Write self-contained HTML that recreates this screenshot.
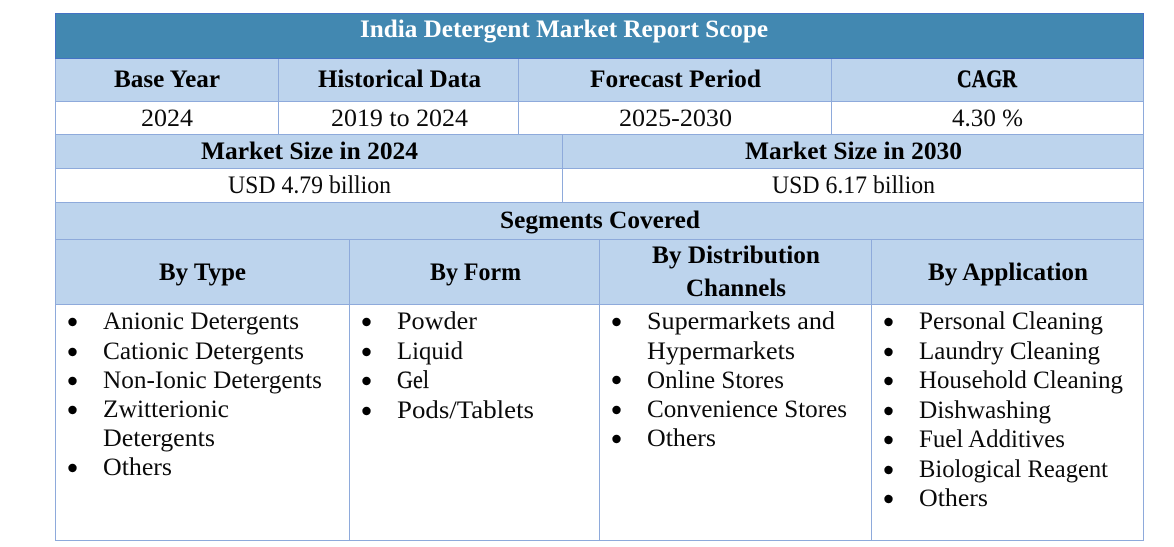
<!DOCTYPE html>
<html lang="en">
<head>
<meta charset="utf-8">
<title>India Detergent Market Report Scope</title>
<style>
html,body{margin:0;padding:0;background:#fff;width:1174px;height:547px;overflow:hidden}
svg{display:block}
text{font-family:"Liberation Serif",serif;font-size:25px;fill:#0a0a0a}
.b{font-weight:bold;fill:#000}
.w{font-weight:bold;fill:#fff}
</style>
</head>
<body>
<svg width="1174" height="547" viewBox="0 0 1174 547" xmlns="http://www.w3.org/2000/svg">
<rect width="1174" height="547" fill="#fff"/>
<g shape-rendering="crispEdges">
<rect x="55" y="13" width="1089" height="46" fill="#4288B1"/>
<rect x="55" y="58" width="1089" height="44" fill="#BDD4ED"/>
<rect x="55" y="134" width="1089" height="35" fill="#BDD4ED"/>
<rect x="55" y="202" width="1089" height="103" fill="#BDD4ED"/>
<g fill="#8EAADB">
<rect x="55" y="101" width="1089" height="1"/>
<rect x="55" y="134" width="1089" height="1"/>
<rect x="55" y="168" width="1089" height="1"/>
<rect x="55" y="202" width="1089" height="1"/>
<rect x="55" y="239" width="1089" height="1"/>
<rect x="55" y="304" width="1089" height="1"/>
<rect x="55" y="540" width="1089" height="1"/>
<rect x="55" y="58" width="1" height="483"/>
<rect x="1143" y="58" width="1" height="483"/>
<rect x="278" y="58" width="1" height="76"/>
<rect x="518" y="58" width="1" height="76"/>
<rect x="831" y="58" width="1" height="76"/>
<rect x="562" y="134" width="1" height="68"/>
<rect x="349" y="239" width="1" height="301"/>
<rect x="599" y="239" width="1" height="301"/>
<rect x="871" y="239" width="1" height="301"/>
</g>
<g fill="#4472C4">
<rect x="55" y="13" width="1089" height="1"/>
<rect x="55" y="58" width="1089" height="1"/>
<rect x="55" y="13" width="1" height="46"/>
<rect x="1143" y="13" width="1" height="46"/>
</g>
</g>

<text class="w" x="360" y="37" textLength="408" lengthAdjust="spacingAndGlyphs">India Detergent Market Report Scope</text>

<text class="b" x="114" y="87" textLength="106" lengthAdjust="spacingAndGlyphs">Base Year</text>
<text class="b" x="318" y="87" textLength="163" lengthAdjust="spacingAndGlyphs">Historical Data</text>
<text class="b" x="590" y="87" textLength="171" lengthAdjust="spacingAndGlyphs">Forecast Period</text>
<text class="b" x="957" y="87" textLength="60" lengthAdjust="spacingAndGlyphs" stroke="#000" stroke-width="0.4">CAGR</text>

<text x="141" y="126" textLength="52" lengthAdjust="spacingAndGlyphs">2024</text>
<text x="331" y="126" textLength="137" lengthAdjust="spacingAndGlyphs">2019 to 2024</text>
<text x="619" y="126" textLength="113" lengthAdjust="spacingAndGlyphs">2025-2030</text>
<text x="952" y="126" textLength="71" lengthAdjust="spacingAndGlyphs">4.30 %</text>

<text class="b" x="201" y="159" textLength="217" lengthAdjust="spacingAndGlyphs">Market Size in 2024</text>
<text class="b" x="745" y="159" textLength="217" lengthAdjust="spacingAndGlyphs">Market Size in 2030</text>

<text x="228" y="193" textLength="163" lengthAdjust="spacingAndGlyphs">USD 4.79 billion</text>
<text x="772" y="193" textLength="163" lengthAdjust="spacingAndGlyphs">USD 6.17 billion</text>

<text class="b" x="500" y="228" textLength="200" lengthAdjust="spacingAndGlyphs">Segments Covered</text>

<text class="b" x="159" y="280" textLength="87" lengthAdjust="spacingAndGlyphs">By Type</text>
<text class="b" x="430" y="280" textLength="91" lengthAdjust="spacingAndGlyphs">By Form</text>
<text class="b" x="652" y="263" textLength="168" lengthAdjust="spacingAndGlyphs">By Distribution</text>
<text class="b" x="686" y="296" textLength="100" lengthAdjust="spacingAndGlyphs">Channels</text>
<text class="b" x="928" y="280" textLength="160" lengthAdjust="spacingAndGlyphs">By Application</text>

<g fill="#000">
<circle cx="72.5" cy="322" r="4.2"/><circle cx="72.5" cy="352" r="4.2"/><circle cx="72.5" cy="381" r="4.2"/><circle cx="72.5" cy="410" r="4.2"/><circle cx="72.5" cy="468" r="4.2"/>
<circle cx="366.5" cy="322" r="4.2"/><circle cx="366.5" cy="352" r="4.2"/><circle cx="366.5" cy="381" r="4.2"/><circle cx="366.5" cy="411" r="4.2"/>
<circle cx="616.5" cy="322" r="4.2"/><circle cx="616.5" cy="380" r="4.2"/><circle cx="616.5" cy="410" r="4.2"/><circle cx="616.5" cy="439" r="4.2"/>
<circle cx="888.5" cy="322" r="4.2"/><circle cx="888.5" cy="352" r="4.2"/><circle cx="888.5" cy="381" r="4.2"/><circle cx="888.5" cy="411" r="4.2"/><circle cx="888.5" cy="440" r="4.2"/><circle cx="888.5" cy="470" r="4.2"/><circle cx="888.5" cy="499" r="4.2"/>
</g>

<text x="103" y="329" textLength="196" lengthAdjust="spacingAndGlyphs">Anionic Detergents</text>
<text x="103" y="359" textLength="201" lengthAdjust="spacingAndGlyphs">Cationic Detergents</text>
<text x="103" y="388" textLength="219" lengthAdjust="spacingAndGlyphs">Non-Ionic Detergents</text>
<text x="103" y="417" textLength="126" lengthAdjust="spacingAndGlyphs">Zwitterionic</text>
<text x="103" y="446" textLength="112" lengthAdjust="spacingAndGlyphs">Detergents</text>
<text x="103" y="475" textLength="69" lengthAdjust="spacingAndGlyphs">Others</text>

<text x="397" y="329" textLength="80" lengthAdjust="spacingAndGlyphs">Powder</text>
<text x="397" y="359" textLength="66" lengthAdjust="spacingAndGlyphs">Liquid</text>
<text x="397" y="388" textLength="32" lengthAdjust="spacingAndGlyphs" stroke="#0a0a0a" stroke-width="0.2">Gel</text>
<text x="397" y="418" textLength="137" lengthAdjust="spacingAndGlyphs">Pods/Tablets</text>

<text x="647" y="329" textLength="188" lengthAdjust="spacingAndGlyphs">Supermarkets and</text>
<text x="647" y="359" textLength="148" lengthAdjust="spacingAndGlyphs">Hypermarkets</text>
<text x="647" y="388" textLength="137" lengthAdjust="spacingAndGlyphs">Online Stores</text>
<text x="647" y="417" textLength="200" lengthAdjust="spacingAndGlyphs">Convenience Stores</text>
<text x="647" y="446" textLength="69" lengthAdjust="spacingAndGlyphs">Others</text>

<text x="919" y="329" textLength="184" lengthAdjust="spacingAndGlyphs">Personal Cleaning</text>
<text x="919" y="359" textLength="181" lengthAdjust="spacingAndGlyphs">Laundry Cleaning</text>
<text x="919" y="388" textLength="204" lengthAdjust="spacingAndGlyphs">Household Cleaning</text>
<text x="919" y="418" textLength="132" lengthAdjust="spacingAndGlyphs">Dishwashing</text>
<text x="919" y="447" textLength="146" lengthAdjust="spacingAndGlyphs">Fuel Additives</text>
<text x="919" y="477" textLength="189" lengthAdjust="spacingAndGlyphs">Biological Reagent</text>
<text x="919" y="506" textLength="69" lengthAdjust="spacingAndGlyphs">Others</text>
</svg>
</body>
</html>
